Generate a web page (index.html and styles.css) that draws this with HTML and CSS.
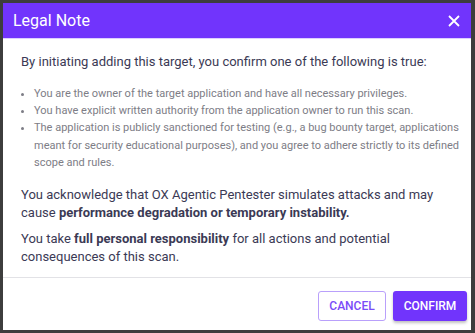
FILE: index.html
```html
<!DOCTYPE html>
<html lang="en">
<head>
    <meta charset="UTF-8">
    <meta name="viewport" content="width=device-width, initial-scale=1.0">
    <title>Legal Note</title>
    <link rel="stylesheet" href="styles.css">
</head>
<body>
    <div class="dialog">
        <div class="dialog-header">
            <h2 class="dialog-title">Legal Note</h2>
            <button class="close-btn" aria-label="Close">
                <svg width="12" height="12" viewBox="0 0 12 12">
                    <path d="M1 1 L11 11 M11 1 L1 11" stroke="#fff" stroke-width="1.8" fill="none"/>
                </svg>
            </button>
        </div>

        <div class="dialog-body">
            <p class="intro">By initiating adding this target, you confirm one of the following is true:</p>
            <ul class="conditions">
                <li>You are the owner of the target application and have all necessary privileges.</li>
                <li>You have explicit written authority from the application owner to run this scan.</li>
                <li>The application is publicly sanctioned for testing (e.g., a bug bounty target, applications meant for security educational purposes), and you agree to adhere strictly to its defined scope and rules.</li>
            </ul>
            <p class="note">You acknowledge that OX Agentic Pentester simulates attacks and may cause <strong>performance degradation or temporary instability.</strong></p>
            <p class="note">You take <strong>full personal responsibility</strong> for all actions and potential consequences of this scan.</p>
        </div>

        <div class="dialog-footer">
            <button class="button button-outline">Cancel</button>
            <button class="button button-primary">Confirm</button>
        </div>
    </div>
</body>
</html>
```

FILE: styles.css
```css
body {
    font-family: 'Roboto', 'Liberation Sans', sans-serif;
    background-color: #3d3d3d;
    margin: 0;
    padding: 3px 4px 3px 3px;
    height: 333px;
    box-sizing: border-box;
    overflow: hidden;
}

.dialog {
    background-color: #fff;
    height: 100%;
    display: flex;
    flex-direction: column;
}

.dialog-header {
    background-color: #7134fc;
    height: 35px;
    border-bottom: 1px solid #ddd0ff;
    display: flex;
    align-items: center;
    justify-content: space-between;
    padding: 0 10px 0 10px;
}

.dialog-title {
    margin: 0;
    color: #fff;
    font-size: 16px;
    font-weight: 400;
}

.close-btn {
    background: none;
    border: none;
    padding: 0;
    width: 14px;
    height: 14px;
    display: flex;
    align-items: center;
    justify-content: center;
    cursor: pointer;
}

.dialog-body {
    flex: 1;
    padding: 14px 10px 0 15px;
    color: #3b3a55;
}

.intro {
    margin: 0 0 0 3px;
    font-size: 13px;
    line-height: 18px;
}

.conditions {
    margin: 14px 0 15px 0;
    padding-left: 16px;
    font-size: 11px;
    line-height: 17.2px;
    color: #7d7d86;
}

.note {
    margin: 0 0 8px 3px;
    font-size: 13px;
    line-height: 18px;
}

.note strong {
    font-weight: 700;
}

.dialog-footer {
    border-top: 1px solid #e2e2e6;
    padding: 13px 4px 9px 0;
    display: flex;
    justify-content: flex-end;
    gap: 7px;
}

.button {
    height: 30px;
    font-family: 'Roboto', sans-serif;
    font-size: 12px;
    font-weight: 500;
    text-transform: uppercase;
    border-radius: 3px;
    cursor: pointer;
}

.button-outline {
    width: 68px;
    background-color: #fff;
    color: #7a4cf8;
    border: 1px solid #b9a0fb;
}

.button-primary {
    width: 74px;
    background-color: #7134fc;
    color: #fff;
    border: none;
    box-shadow: 0 2px 3px rgba(0, 0, 0, 0.25);
}
```
